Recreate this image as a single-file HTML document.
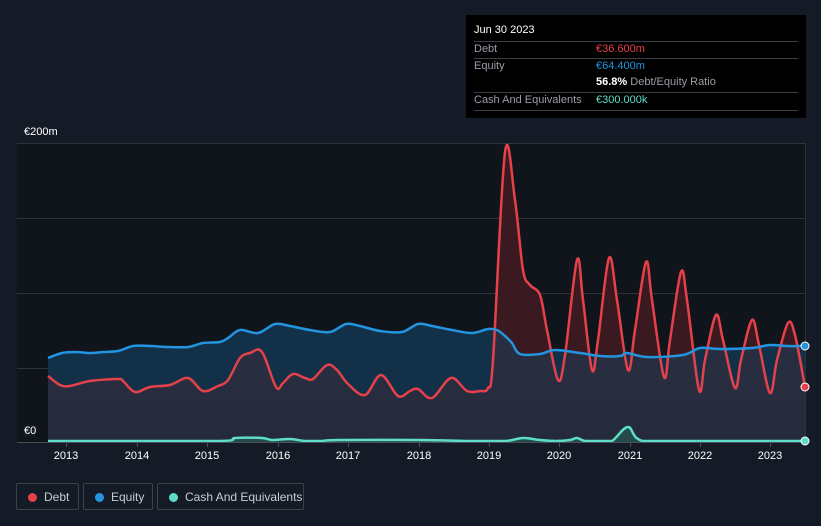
<!DOCTYPE html>
<html><head><meta charset="utf-8"><style>
html,body{margin:0;padding:0;background:#151b26;width:821px;height:526px;overflow:hidden;font-family:"Liberation Sans",sans-serif}
.tip{position:absolute;left:466px;top:15px;width:340px;height:103px;background:#000;color:#fff;font-size:11px}
.row{position:absolute;left:8px;right:8px;height:17px;line-height:15px;border-top:1px solid #3a3f47;color:#9a9ea6}
.row span{position:absolute;left:122px}
.leg{position:absolute;top:483px;height:27px;border:1px solid #3c424c;border-radius:2px;color:#c9ccd2;font-size:12px;line-height:27px;box-sizing:border-box}
.leg i{position:absolute;left:11px;top:9px;width:9px;height:9px;border-radius:50%}
.leg b{font-weight:normal;position:absolute;left:27px}
.yl{position:absolute;color:#fff;font-size:11px}
.xl{position:absolute;top:450px;color:#fff;font-size:11px;width:40px;text-align:center}
</style></head><body>
<svg id="s" width="821" height="526" style="position:absolute;left:0;top:0">
<defs>
<linearGradient id="ga" x1="0" y1="0" x2="0" y2="1"><stop offset="0" stop-color="#32394f" stop-opacity=".95"/><stop offset="1" stop-color="#262a3a" stop-opacity=".95"/></linearGradient>
</defs>
<rect x="17" y="143" width="788" height="299" fill="#10141b"/>
<g stroke="#2e333b" stroke-width="1"><line x1="17" y1="143.5" x2="805" y2="143.5"/><line x1="17" y1="218.5" x2="805" y2="218.5"/><line x1="17" y1="293.5" x2="805" y2="293.5"/><line x1="17" y1="368.5" x2="805" y2="368.5"/><line x1="805.5" y1="143" x2="805.5" y2="442"/></g>
<path id="debtF" fill="#3a1a20"/>
<path id="eqF" fill="#133049"/>
<path id="botF" fill="url(#ga)"/>
<path id="cashF" fill="#254a4a"/>
<path id="debtL" fill="none" stroke="#e5414a" stroke-width="2.5"/>
<path id="eqL" fill="none" stroke="#2394e0" stroke-width="2.5"/>
<path id="cashL" fill="none" stroke="#5ddcc8" stroke-width="2.5"/>
<line x1="17" y1="442.5" x2="805" y2="442.5" stroke="#4a4f57"/>
<g stroke="#4a4f57"><line x1="66.5" y1="442" x2="66.5" y2="447"/><line x1="137.5" y1="442" x2="137.5" y2="447"/><line x1="207.5" y1="442" x2="207.5" y2="447"/><line x1="278.5" y1="442" x2="278.5" y2="447"/><line x1="348.5" y1="442" x2="348.5" y2="447"/><line x1="419.5" y1="442" x2="419.5" y2="447"/><line x1="489.5" y1="442" x2="489.5" y2="447"/><line x1="559.5" y1="442" x2="559.5" y2="447"/><line x1="630.5" y1="442" x2="630.5" y2="447"/><line x1="700.5" y1="442" x2="700.5" y2="447"/><line x1="770.5" y1="442" x2="770.5" y2="447"/></g>
<circle cx="805" cy="346" r="4" fill="#2394e0" stroke="#fff" stroke-width="1"/>
<circle cx="805" cy="387" r="4" fill="#e5414a" stroke="#fff" stroke-width="1"/>
<circle cx="805" cy="441" r="4" fill="#5ddcc8" stroke="#fff" stroke-width="1"/>
</svg>
<div class="yl" style="left:24px;top:126px">€200m</div>
<div class="yl" style="left:24px;top:425px;background:#151b26">€0</div>
<div class="xl" style="left:46px">2013</div><div class="xl" style="left:117px">2014</div><div class="xl" style="left:187px">2015</div><div class="xl" style="left:258px">2016</div><div class="xl" style="left:328px">2017</div><div class="xl" style="left:399px">2018</div><div class="xl" style="left:469px">2019</div><div class="xl" style="left:539px">2020</div><div class="xl" style="left:610px">2021</div><div class="xl" style="left:680px">2022</div><div class="xl" style="left:750px">2023</div>
<div class="tip">
<div style="position:absolute;left:8px;top:9px;font-size:11px">Jun 30 2023</div>
<div class="row" style="top:26px">Debt<span style="color:#e5414a">€36.600m</span></div>
<div class="row" style="top:43px">Equity<span style="color:#2394e0">€64.400m</span></div>
<div class="row" style="top:60px;border-top:none"><span style="color:#9a9ea6"><b style="color:#fff">56.8%</b> Debt/Equity Ratio</span></div>
<div class="row" style="top:77px">Cash And Equivalents<span style="color:#5ddcc8">€300.000k</span></div>
<div style="position:absolute;left:8px;right:8px;top:95px;border-top:1px solid #3a3f47"></div>
</div>
<div class="leg" style="left:16px;width:63px"><i style="background:#e5414a"></i><b>Debt</b></div>
<div class="leg" style="left:83px;width:70px"><i style="background:#2394e0"></i><b>Equity</b></div>
<div class="leg" style="left:157px;width:147px"><i style="background:#5ddcc8"></i><b>Cash And Equivalents</b></div>
<script>
function sm(p,cl){let d="M"+p[0][0]+","+p[0][1];const f=v=>cl?Math.min(v,cl):v;for(let i=0;i<p.length-1;i++){const a=p[i-1]||p[i],b=p[i],c=p[i+1],e=p[i+2]||c;const c1=[b[0]+(c[0]-a[0])/6,f(b[1]+(c[1]-a[1])/6)],c2=[c[0]-(e[0]-b[0])/6,f(c[1]-(e[1]-b[1])/6)];d+="C"+c1.join(",")+" "+c2.join(",")+" "+c.join(",");}return d;}
const debt=[[48,376],[60,385],[70,386],[90,381],[118,379],[123,381],[135,392],[150,387],[170,385],[188,378],[203,391],[218,386],[228,380],[240,358],[250,353],[262,352],[276,387],[283,383],[293,374],[305,378],[313,379],[327,365],[337,370],[348,384],[365,395],[381,375],[398,396],[410,391],[418,389],[432,398],[451,378],[467,391],[480,391],[488,388],[493,360],[505,152],[515,200],[523,270],[530,285],[540,295],[547,330],[558,380],[565,355],[577,260],[583,300],[592,370],[598,340],[609,258],[617,300],[628,370],[635,330],[646,262],[652,300],[664,377],[670,340],[681,272],[687,300],[699,390],[705,360],[716,315],[723,340],[735,388],[741,360],[752,320],[759,345],[770,393],[777,360],[788,323],[795,335],[805,387]];
const eq=[[48,358],[62,353],[75,352],[90,353],[103,352],[118,351],[133,346],[150,346],[168,347],[188,347],[203,343],[220,342],[228,338],[240,330],[258,333],[275,324],[290,326],[310,330],[330,332],[346,324],[360,326],[380,331],[402,332],[418,324],[432,326],[452,330],[472,333],[488,329],[497,330],[505,336],[512,343],[520,354],[540,354],[555,350],[580,353],[600,356],[620,356],[627,353],[647,357],[683,355],[700,348],[720,349],[752,348],[770,345],[787,346],[805,346]];
const cash=[[48,441],[100,441],[220,441],[235,438],[262,438],[272,440],[290,439],[305,441],[320,441],[340,440],[420,440],[470,441],[505,441],[523,438],[540,440],[556,441],[570,440],[577,438],[585,441],[600,441],[612,441],[628,427],[643,441],[700,441],[805,441]];
function g(id){return document.getElementById(id)}
const fill=(p,c)=>sm(p,c)+"L805,442L48,442Z";
g("debtL").setAttribute("d",sm(debt));g("debtF").setAttribute("d",fill(debt));
g("eqL").setAttribute("d",sm(eq));g("eqF").setAttribute("d",fill(eq));
g("cashL").setAttribute("d",sm(cash,441));g("cashF").setAttribute("d",fill(cash,441));
const svg=g("s");const ns="http://www.w3.org/2000/svg";
const cp=document.createElementNS(ns,"clipPath");cp.id="ce";const cpp=document.createElementNS(ns,"path");cpp.setAttribute("d",fill(eq));cp.appendChild(cpp);svg.querySelector("defs").appendChild(cp);
g("botF").setAttribute("d",fill(debt));g("botF").setAttribute("clip-path","url(#ce)");
</script>
</body></html>
